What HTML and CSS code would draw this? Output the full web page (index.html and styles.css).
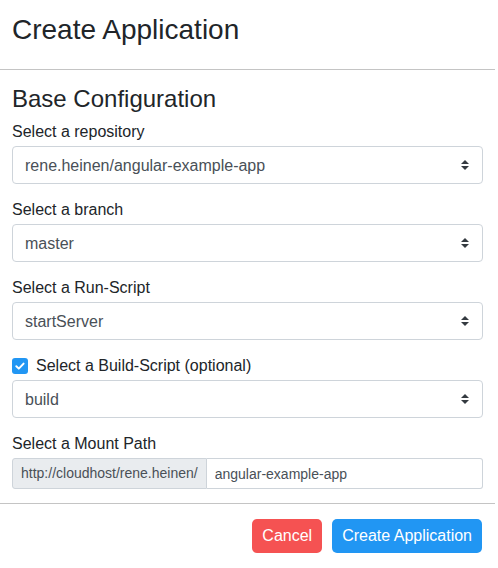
FILE: index.html
```html
<!DOCTYPE html>
<html lang="en">
<head>
<meta charset="utf-8">
<title>Create Application</title>
<link rel="stylesheet" href="styles.css">
</head>
<body>
<div class="modal">
  <div class="modal-header">
    <h2 class="modal-title">Create Application</h2>
  </div>
  <div class="modal-body">
    <h4 class="section-title">Base Configuration</h4>
    <div class="group">
      <label class="label">Select a repository</label>
      <select class="select"><option>rene.heinen/angular-example-app</option></select>
    </div>
    <div class="group">
      <label class="label">Select a branch</label>
      <select class="select"><option>master</option></select>
    </div>
    <div class="group">
      <label class="label">Select a Run-Script</label>
      <select class="select"><option>startServer</option></select>
    </div>
    <div class="group">
      <label class="label check-label">
        <span class="checkbox"><svg viewBox="0 0 16 16" width="16" height="16"><path d="M4.3 8.2 L6.8 10.6 L11.6 5.6" fill="none" stroke="#fff" stroke-width="2" stroke-linecap="round" stroke-linejoin="round"/></svg></span>
        Select a Build-Script (optional)
      </label>
      <select class="select"><option>build</option></select>
    </div>
    <div class="group">
      <label class="label">Select a Mount Path</label>
      <div class="input-group">
        <span class="prepend">http://cloudhost/rene.heinen/</span>
        <input class="input" type="text" value="angular-example-app">
      </div>
    </div>
  </div>
  <div class="modal-footer">
    <button class="btn btn-cancel">Cancel</button>
    <button class="btn btn-create">Create Application</button>
  </div>
</div>
</body>
</html>
```
FILE: styles.css
```css
* { box-sizing: border-box; }
html, body { margin: 0; padding: 0; background: #fff; }
body {
  font-family: "Liberation Sans", Arial, sans-serif;
  color: #212529;
  font-size: 16px;
  line-height: 1.5;
}
.modal { width: 495px; }
.modal-header {
  padding: 13px 12px 22px;
  border-bottom: 1px solid #c4c4c4;
}
.modal-title {
  margin: 0;
  font-size: 28px;
  font-weight: 400;
  line-height: 1.2;
}
.modal-body { padding: 15px 12px 0; }
.section-title {
  margin: 0 0 7px;
  font-size: 24px;
  font-weight: 400;
  line-height: 1.2;
}
.group { margin-bottom: 14px; }
.label {
  display: block;
  font-size: 16px;
  line-height: 24px;
  margin-bottom: 2px;
}
.check-label { display: flex; align-items: center; gap: 8px; }
.checkbox {
  width: 16px; height: 16px;
  border-radius: 3px;
  background: #2196f3;
  display: inline-flex;
}
.select {
  display: block;
  width: 100%;
  height: 38px;
  padding: 0 28px 0 12px;
  font-family: inherit;
  font-size: 16px;
  color: #495057;
  background: #fff url("data:image/svg+xml;charset=utf8,%3Csvg xmlns='http://www.w3.org/2000/svg' width='8' height='10' viewBox='0 0 8 10'%3E%3Cpath fill='%23343a40' d='M4 0 L8 4 H0 Z M4 10 L0 6 H8 Z'/%3E%3C/svg%3E") no-repeat right 13px center / 8px 10px;
  border: 1px solid #ced4da;
  border-radius: 4px;
  -webkit-appearance: none;
  appearance: none;
  outline: none;
}
.input-group { display: flex; height: 31px; }
.prepend {
  display: flex; align-items: center;
  padding: 0 8px;
  font-size: 14px;
  color: #495057;
  background: #e9ecef;
  border: 1px solid #ced4da;
  border-radius: 3px 0 0 3px;
  white-space: nowrap;
}
.input {
  flex: 1;
  min-width: 0;
  height: 31px;
  padding: 0 8px;
  font-family: inherit;
  font-size: 14px;
  color: #495057;
  border: 1px solid #ced4da;
  border-left: none;
  border-radius: 0 3px 3px 0;
  outline: none;
}
.modal-footer {
  margin-top: 1px;
  border-top: 1px solid #c4c4c4;
  padding: 15px 13px 15px;
  display: flex;
  justify-content: flex-end;
  gap: 10px;
}
.btn {
  height: 34px;
  padding: 0 10px;
  font-family: inherit;
  font-size: 16px;
  color: #fff;
  border: none;
  border-radius: 5px;
  cursor: pointer;
}
.btn-cancel { background: #f55252; }
.btn-create { background: #2196f3; }
```
